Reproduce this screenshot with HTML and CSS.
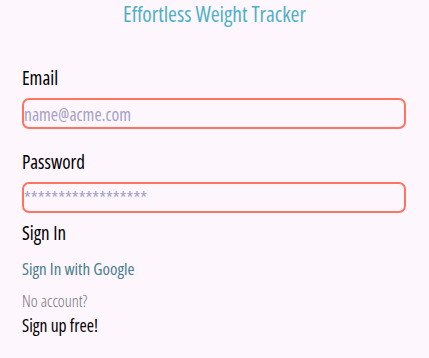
FILE: index.html
```html
<!DOCTYPE html>
<html>
<head>
<meta charset="utf-8">
<link rel="stylesheet" href="styles.css">
</head>
<body>
<main class="page">
  <h1 class="title">Effortless Weight Tracker</h1>
  <form class="form">
    <label class="label" for="email">Email</label>
    <input class="field" id="email" type="email" placeholder="name@acme.com">
    <label class="label label-pw" for="pw">Password</label>
    <input class="field" id="pw" type="password" placeholder="******************">
    <div class="signin">Sign In</div>
    <a class="google">Sign In with Google</a>
    <div class="noacc">No account?</div>
    <a class="signup">Sign up free!</a>
  </form>
</main>
</body>
</html>
```
FILE: styles.css
```css
html, body {
  margin: 0;
  padding: 0;
  background: #fdf6fd;
}
body {
  font-family: "Open Sans", sans-serif;
  font-stretch: 75%;
  color: #000;
}
.page {
  padding: 0 22px;
}
.title {
  margin: 0;
  padding-top: 1px;
  text-align: center;
  font-size: 21.5px;
  font-weight: 500;
  color: #4fb0c6;
  line-height: 26px;
}
.form {
  display: flex;
  flex-direction: column;
  align-items: flex-start;
  margin-top: 39px;
}
.label {
  font-size: 19px;
  line-height: 24px;
}
.label-pw {
  margin-top: 21px;
}
.field {
  box-sizing: border-box;
  width: 384px;
  height: 31px;
  margin: 8px 0 0 0;
  padding: 0;
  border: 2px solid #ff7461;
  border-radius: 7px;
  background: transparent;
  font-family: inherit;
  font-stretch: 75%;
  font-size: 17.5px;
  outline: none;
}
.field::placeholder {
  color: #a3a2c2;
}
.signin {
  margin-top: 8px;
  font-size: 19px;
  line-height: 24px;
}
.google {
  margin-top: 13px;
  font-size: 17px;
  line-height: 22px;
  color: #4a7e8e;
}
.noacc {
  margin-top: 10px;
  font-size: 16.5px;
  line-height: 22px;
  font-weight: 300;
  color: #77747f;
}
.signup {
  margin-top: 1px;
  font-size: 17.5px;
  line-height: 24px;
  color: #000;
}
```
